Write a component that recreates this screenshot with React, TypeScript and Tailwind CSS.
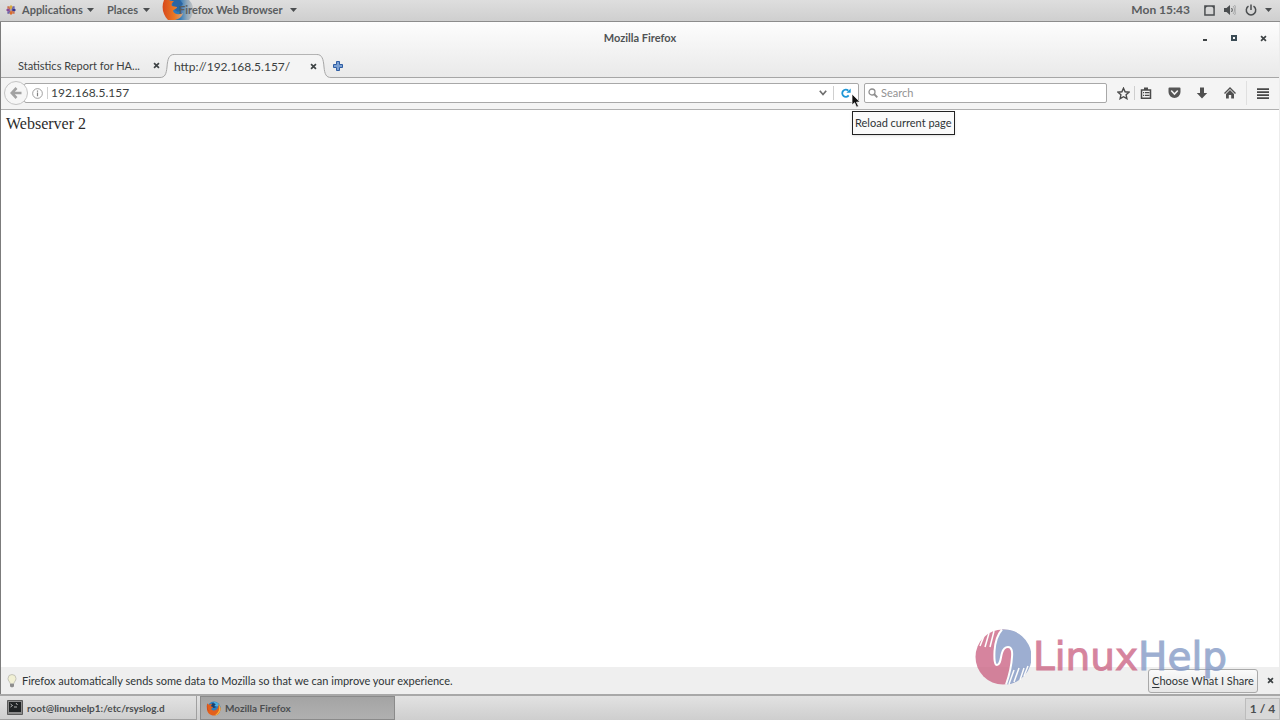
import type { ReactNode } from "react";

function FirefoxLogo({ className }: { className: string }) {
  return (
    <svg viewBox="0 0 32 32" className={className} aria-hidden="true">
      <circle cx="17" cy="15" r="14" fill="#2f7fc0" />
      <path d="M17 2c6 0 11 4 13 9-4-1-6 1-9 0-3-1-5-5-4-9z" fill="#4fb0e0" />
      <path d="M12 6c3-2 7-1 9 2-2 0-3 1-3 3l4 2-5 2-6-2z" fill="#17406f" />
      <path d="M3 5c1 2 2 3 4 3 2-2 4-2 6-1-2 1-3 3-3 4l5 2c0 2-3 2-4 4 2 4 8 4 12 1 3-3 4-6 3-11 3 2 5 6 5 10 0 8-6 14-14 14S2 25 2 17c0-4-1-8 1-12z" fill="#e2601c" />
      <path d="M27 8c3 3 4 6 4 10-1 7-6 12-13 13 6-4 10-9 10-15 0-3 0-5-1-8z" fill="#f5b43c" />
      <path d="M3 6c-1 6 0 12 4 17-3-2-5-6-5-10 0-3 0-5 1-7z" fill="#c5381d" />
    </svg>
  );
}

/* The panel version fades out to the right, under the app name. */
function PanelFirefoxLogo() {
  return (
    <svg viewBox="0 0 32 21" className="absolute top-0 left-0 h-[21px] w-8" aria-hidden="true">
      <defs>
        <linearGradient id="panel-globe" x1="0" x2="1">
          <stop offset=".45" stopColor="#2f79b8" />
          <stop offset=".75" stopColor="#93a9ba" />
          <stop offset="1" stopColor="#c2c3c4" />
        </linearGradient>
        <linearGradient id="panel-fox" x1="0" x2="1">
          <stop offset="0" stopColor="#d8481c" />
          <stop offset=".6" stopColor="#ea7a24" />
          <stop offset="1" stopColor="#c9a68a" />
        </linearGradient>
      </defs>
      <path d="M7 0h20q5 5 4 12-1 5-4 8H9z" fill="url(#panel-globe)" />
      <path d="M10 0h8l3 4-3 3 2 2-4 3-5-3z" fill="#2a65a3" />
      <path d="M2 0h5c1 1 3 1 5 1-2 2-3 3-2 5l5 1c0 2-3 2-4 4 2 4 6 4 10 2-1 4-4 6-8 7H6C1 15-1 7 2 0z" fill="url(#panel-fox)" />
    </svg>
  );
}

function Caret() {
  return (
    <svg viewBox="0 0 7 4" className="h-1 w-[7px] shrink-0" aria-hidden="true">
      <path d="M0 0h7L3.5 4z" fill="#4b4e50" />
    </svg>
  );
}

function CloseIcon({ color = "#3e4345" }: { color?: string }) {
  return (
    <svg viewBox="0 0 8 8" className="size-[7px]" aria-hidden="true">
      <path d="M1.2 1.2l5.6 5.6M6.8 1.2L1.2 6.8" stroke={color} strokeWidth="1.9" />
    </svg>
  );
}

function ToolButton({ label, children }: { label: string; children: ReactNode }) {
  return (
    <button type="button" aria-label={label} className="flex h-6 w-7 items-center justify-center">
      {children}
    </button>
  );
}

function TopPanel() {
  return (
    <header className="flex h-[22px] shrink-0 items-center border-b border-[#8c8c8c] bg-linear-to-b from-[#dedede] to-[#cfcfcf] pb-px text-[11px] leading-4 font-bold text-[#5a5d5f]">
      <button type="button" className="flex items-center gap-[3px] pl-[6px]">
        <svg viewBox="0 0 11 11" className="mr-[3px] size-[10px]" aria-hidden="true">
          <path d="M5.500 0l2 2-2 3.500L3.500 2z" fill="#d9a93f" />
          <path d="M11 5.500l-2 2-3.500-2 3.500-2z" fill="#33348e" />
          <path d="M5.500 11l-2-2 2-3.500L7.500 9z" fill="#d96b2b" />
          <path d="M0 5.500l2-2 3.500 2-3.500 2z" fill="#8b4a94" />
          <path d="M7.500 1.500h2v2L6 5zM1.500 7.500v2h2L5 6z" fill="#6b62a8" />
          <path d="M1.500 3.500v-2h2L5 5zM9.500 7.500v2h-2L6 6z" fill="#c9704e" />
        </svg>
        <span className="w-[62px] text-left">Applications</span>
        <Caret />
      </button>
      <button type="button" className="flex items-center gap-1 pl-[13px]">
        <span className="w-8 text-left whitespace-nowrap">Places</span>
        <Caret />
      </button>
      <button type="button" className="relative ml-3 flex h-[21px] items-center gap-[3px] overflow-hidden pl-[17px]">
        <PanelFirefoxLogo />
        <span className="relative w-[108px] text-left whitespace-nowrap">Firefox Web Browser</span>
        <Caret />
      </button>
      <div className="ml-auto flex items-center pr-2">
        <time className="pr-[14px] text-[12px]">Mon 15:43</time>
        <svg viewBox="0 0 12 12" className="mr-[9px] size-[11px]" aria-hidden="true">
          <path d="M1 1h10v10H1z" fill="none" stroke="#4b4e50" strokeWidth="1.6" />
          <path d="M1 1h3L1 4zM11 1H8l3 3z" fill="#4b4e50" />
        </svg>
        <svg viewBox="0 0 12 12" className="mr-[9px] size-3" aria-hidden="true">
          <path d="M0 4h2.500L6 1v10L2.500 8H0z" fill="#4b4e50" />
          <path d="M7.500 4c1 1.200 1 2.800 0 4" fill="none" stroke="#4b4e50" />
          <path d="M9 2c2 2.200 2 5.800 0 8M10.500 1c2 3 2 7 0 10" fill="none" stroke="#a4a5a6" />
        </svg>
        <svg viewBox="0 0 12 12" className="mr-2 size-3" aria-hidden="true">
          <path d="M3.500 2.200a4.700 4.700 0 1 0 5 0M6 .5V6" fill="none" stroke="#4b4e50" strokeWidth="1.500" />
        </svg>
        <Caret />
      </div>
    </header>
  );
}

function TitleBar() {
  return (
    <div className="grid h-8 shrink-0 grid-cols-[1fr_auto_1fr] items-center text-[11px] leading-4 font-bold text-[#505355]">
      <span />
      <h1>Mozilla Firefox</h1>
      <div className="flex items-center justify-end gap-[23px] pr-3">
        <button type="button" aria-label="Minimize" className="flex size-[6px] items-end justify-center">
          <span className="h-[2px] w-1 bg-[#3e4345]" />
        </button>
        <button type="button" aria-label="Maximize" className="size-[6px] border-2 border-[#3b4b55]" />
        <button type="button" aria-label="Close window">
          <CloseIcon />
        </button>
      </div>
    </div>
  );
}

function TabStrip() {
  return (
    <div className="flex h-6 shrink-0 text-[12px] leading-4 text-[#3c3f41]">
      <div className="flex w-[159px] items-center border-b border-[#a6a6a6] pl-[17px]">
        <span className="flex-1 text-[11px] whitespace-nowrap">Statistics Report for HA...</span>
        <button type="button" aria-label="Close Statistics Report tab">
          <CloseIcon />
        </button>
      </div>
      <div className="flex w-[171px]">
        <svg viewBox="0 0 14 24" className="h-6 w-[14px] shrink-0" aria-hidden="true">
          <path d="M0 23.500C5 23.500 6.300 20 7 13 7.600 5 9 .5 14 .5V24H0z" fill="#f4f4f4" />
          <path d="M0 23.500C5 23.500 6.300 20 7 13 7.600 5 9 .5 14 .5" fill="none" stroke="#a6a6a6" />
        </svg>
        <div className="flex flex-1 items-center border-t border-[#b4b4b4] bg-[#f4f4f4]">
          <span className="flex-1">http://192.168.5.157/</span>
          <button type="button" aria-label="Close current tab">
            <CloseIcon />
          </button>
        </div>
        <svg viewBox="0 0 14 24" className="h-6 w-[14px] shrink-0" aria-hidden="true">
          <path d="M14 23.500C9 23.500 7.700 20 7 13 6.400 5 5 .5 0 .5V24h14z" fill="#f4f4f4" />
          <path d="M14 23.500C9 23.500 7.700 20 7 13 6.400 5 5 .5 0 .5" fill="none" stroke="#a6a6a6" />
        </svg>
      </div>
      <div className="flex flex-1 items-center border-b border-[#a6a6a6] pl-[2px]">
        <button type="button" aria-label="Open a new tab">
          <svg viewBox="0 0 10 10" className="size-[10px]" aria-hidden="true">
            <path d="M3.500.5h3v3h3v3h-3v3h-3v-3h-3v-3h3z" fill="#7ba0d2" stroke="#2f5da3" />
          </svg>
        </button>
      </div>
    </div>
  );
}

function NavBar() {
  return (
    <nav className="flex h-8 shrink-0 items-center border-b border-[#b0b0b0] bg-[#f4f4f4] pr-[2px] pb-px pl-[3px]">
      <button type="button" aria-label="Back" className="z-10 flex size-6 shrink-0 items-center justify-center rounded-full border border-[#c4c4c4] bg-[#f6f6f6]">
        <svg viewBox="0 0 12 12" className="size-3" aria-hidden="true">
          <path d="M6.500 1L1.800 6l4.700 5M2 6h9.500" fill="none" stroke="#a2a2a2" strokeWidth="2.600" />
        </svg>
      </button>
      <div className="relative -ml-1 flex h-5 flex-1 items-center rounded-[2px] border border-[#a8a8a8] bg-white pl-[7px]">
        <svg viewBox="0 0 12 12" className="size-[11px] shrink-0" aria-hidden="true">
          <circle cx="6" cy="6" r="5.300" fill="none" stroke="#8c8c8c" strokeWidth=".9" />
          <path d="M6 5v4M6 2.700v1.400" stroke="#808080" strokeWidth="1.300" />
        </svg>
        <span className="ml-1 h-3 w-px bg-[#cfcfcf]" />
        <input
          aria-label="Address"
          defaultValue="192.168.5.157"
          className="ml-[3px] min-w-0 flex-1 text-[12px] leading-4 text-[#3c3f41] outline-none"
        />
        <button type="button" aria-label="Show history" className="mr-[6px]">
          <svg viewBox="0 0 8 6" className="h-[6px] w-2" aria-hidden="true">
            <path d="M.8.8L4 4.500 7.200.8" fill="none" stroke="#6e6e6e" strokeWidth="1.700" />
          </svg>
        </button>
        <span className="h-[14px] w-px bg-[#cfcfcf]" />
        <button type="button" aria-label="Reload" aria-describedby="reload-tip" className="flex w-6 justify-center">
          <svg viewBox="0 0 10 10" className="size-[10px]" aria-hidden="true">
            <path d="M7.300 2.600a3.600 3.600 0 1 0 .4 4.800" fill="none" stroke="#1e96d6" strokeWidth="1.800" />
            <path d="M9.700.5v4.300H5.400z" fill="#1e96d6" />
          </svg>
        </button>
        <svg viewBox="0 0 10 16" className="absolute top-[9px] -right-[3px] z-20 h-4 w-[10px]" aria-hidden="true">
          <path d="M1 1v11l2.600-2.300 2 4.500 1.900-.9-2-4.200H9z" fill="#111" stroke="#fff" strokeWidth=".7" />
        </svg>
        <div
          id="reload-tip"
          role="tooltip"
          className="absolute top-[27px] left-full z-10 -ml-[6px] border border-[#222] bg-[#fafafa] px-[2px] py-[3px] text-[11px] leading-4 whitespace-nowrap text-[#2e3436] shadow-sm"
        >
          Reload current page
        </div>
      </div>
      <label className="ml-[5px] flex h-5 w-[243px] items-center rounded-[2px] border border-[#a8a8a8] bg-white pl-[3px]">
        <svg viewBox="0 0 10 10" className="size-[10px] shrink-0" aria-hidden="true">
          <circle cx="4" cy="4" r="3" fill="none" stroke="#8e8e8e" strokeWidth="1.300" />
          <path d="M6 6l3.300 3.300" stroke="#8e8e8e" strokeWidth="1.900" />
        </svg>
        <input
          aria-label="Search"
          placeholder="Search"
          className="ml-[3px] min-w-0 flex-1 text-[11px] leading-4 outline-none placeholder:text-[#929292]"
        />
      </label>
      <div className="ml-[2px] flex items-center">
        <ToolButton label="Bookmark this page">
          <svg viewBox="0 0 13 13" className="size-[13px]" aria-hidden="true">
            <path d="M6.500 1.200l1.600 3.600 3.900.4-2.900 2.600.8 3.900-3.400-2-3.400 2 .8-3.900L1 5.200l3.900-.4z" fill="none" stroke="#4a4a4a" strokeWidth="1.400" />
          </svg>
        </ToolButton>
        <span className="-mr-[3px] -ml-[3px] h-[14px] w-px bg-[#cfcfcf]" />
        <ToolButton label="Bookmarks list">
          <svg viewBox="0 0 12 12" className="size-3" aria-hidden="true">
            <path d="M1.500 3h9v8.200h-9z" fill="none" stroke="#4a4a4a" strokeWidth="1.500" />
            <path d="M4 .5h4V3H4zM3 5h1.200v1.200H3zM5 5h4.500v1.200H5zM3 7.800h1.200V9H3zM5 7.800h4.500V9H5z" fill="#4a4a4a" />
          </svg>
        </ToolButton>
        <ToolButton label="Save to Pocket">
          <svg viewBox="0 0 13 12" className="h-3 w-[13px]" aria-hidden="true">
            <path d="M1.500.5h10q1 0 1 1V5a6 6 0 0 1-12 0V1.500q0-1 1-1z" fill="#565656" />
            <path d="M3.600 4l2.900 3 2.900-3" fill="none" stroke="#f4f4f4" strokeWidth="1.600" strokeLinecap="round" />
          </svg>
        </ToolButton>
        <ToolButton label="Downloads">
          <svg viewBox="0 0 12 12" className="size-3" aria-hidden="true">
            <path d="M4 .5h4V6h3.200L6 11.600.8 6H4z" fill="#505050" />
          </svg>
        </ToolButton>
        <ToolButton label="Home">
          <svg viewBox="0 0 12 12" className="size-3" aria-hidden="true">
            <path d="M.5 6.400L6 1l5.500 5.400" fill="none" stroke="#505050" strokeWidth="1.400" />
            <path d="M2 6.900l4-4 4 4v4.600H7.200V8H4.800v3.500H2z" fill="#505050" />
          </svg>
        </ToolButton>
        <span className="mx-[2px] h-6 w-px bg-[#e0e0e0]" />
        <ToolButton label="Open menu">
          <svg viewBox="0 0 12 11" className="h-[11px] w-3" aria-hidden="true">
            <path d="M0 1.200h12M0 4.200h12M0 7.200h12M0 10.200h12" stroke="#484848" strokeWidth="1.700" />
          </svg>
        </ToolButton>
      </div>
    </nav>
  );
}

function Watermark() {
  return (
    <div className="pointer-events-none absolute right-[52px] bottom-[9px] z-20 flex items-center gap-[2px] opacity-80">
      <svg viewBox="0 0 56 56" className="size-14" aria-hidden="true">
        <circle cx="28" cy="28" r="27.500" fill="#cc6686" />
        <path d="M27 .5C22 6 20 14 19.500 22c-.3 7-.2 14 2.500 14 3.500 0 3.500-7 5-12s3.500-6 6-6c4 0 4.500 5 4 10-.5 9-3 19-6 27.500A27.500 27.500 0 0 0 27 .5z" fill="#859bc6" />
        <path d="M27 .5C22 6 20 14 19.500 22c-.3 7-.2 14 2.500 14 3.500 0 3.500-7 5-12s3.500-6 6-6c4 0 4.500 5 4 10-.5 9-3 19-6 27.500" fill="none" stroke="#fff" strokeWidth="2" />
        <path d="M9 7L5 17M14 4l-4 14M19 2l-4 16M49 39l-4 12M44 39l-5 14M39 41l-5 14M53 37l-4 10" fill="none" stroke="#fff" strokeWidth="1.500" />
      </svg>
      <span className="font-['DejaVu_Sans',sans-serif] text-[39px] leading-[48px] text-[#859bc6] [-webkit-text-stroke:1px_currentColor]">
        <span className="text-[#cc6686]">Linux</span>Help
      </span>
    </div>
  );
}

function NotificationBar() {
  return (
    <aside className="relative flex h-[27px] shrink-0 items-center bg-[#efefef] pr-[5px] pl-[6px] text-[11px] leading-4 text-[#2e3436]">
      <svg viewBox="0 0 10 14" className="mr-[5px] h-[14px] w-[10px]" aria-hidden="true">
        <path d="M5 .5a4 4 0 0 0-4 4C1 7 3 7.500 3 9.500h4c0-2 2-2.500 2-5a4 4 0 0 0-4-4z" fill="#f1f0d4" stroke="#b8b8ae" strokeWidth=".8" />
        <path d="M3 10h4v2.500L5 13.500 3 12.500z" fill="#8e8e8e" />
      </svg>
      <p className="flex-1">Firefox automatically sends some data to Mozilla so that we can improve your experience.</p>
      <button
        type="button"
        className="h-6 w-[110px] rounded-[3px] border border-[#a9a9a9] bg-linear-to-b from-[#fafafa] to-[#e6e6e6] whitespace-nowrap"
      >
        <span className="underline underline-offset-2">C</span>hoose What I Share
      </button>
      <button type="button" aria-label="Dismiss notification" className="ml-[9px]">
        <CloseIcon />
      </button>
      <Watermark />
    </aside>
  );
}

function TaskBar() {
  return (
    <footer className="flex h-[26px] shrink-0 items-stretch border-t-2 border-[#a8a8a8] bg-linear-to-b from-[#e2e2e2] to-[#cecece] text-[10px] leading-4 font-bold text-[#4b4e50]">
      <button type="button" className="flex w-[197px] items-center gap-1 border-r border-b border-[#a0a0a0] pl-[7px]">
        <svg viewBox="0 0 16 15" className="h-[15px] w-4" aria-hidden="true">
          <path d="M.5.5h15v14H.5z" fill="#8b8b8b" stroke="#5a5a5a" />
          <path d="M2 2h12v10H2z" fill="#202324" />
          <path d="M3.500 4l2 1.500-2 1.500M7 7h3M9 3l1.500 2" fill="none" stroke="#d8d8d8" strokeWidth=".8" />
        </svg>
        root@linuxhelp1:/etc/rsyslog.d
      </button>
      <button type="button" className="ml-[3px] flex w-[195px] items-center gap-1 border border-[#8a8a8a] bg-linear-to-b from-[#a4a4a4] to-[#b0b0b0] pl-[5px]">
        <FirefoxLogo className="size-[15px]" />
        Mozilla Firefox
      </button>
      <div className="mt-[2px] ml-auto flex w-[35px] items-center justify-center border border-[#bcbcbc] bg-[#d8d8d8] text-[12px] whitespace-nowrap">
        1 / 4
      </div>
    </footer>
  );
}

export default function App() {
  return (
    <div className="flex h-screen flex-col overflow-hidden bg-white font-[Lato,'Open_Sans',sans-serif]">
      <TopPanel />
      <div className="flex min-h-0 flex-1 flex-col border-r border-l border-r-[#ececec] border-l-[#7c7c7c]">
        <div className="flex shrink-0 flex-col bg-linear-to-b from-[#fdfdfd] to-[#e9e9e9]">
          <TitleBar />
          <TabStrip />
        </div>
        <NavBar />
        <main className="min-h-0 flex-1 bg-white px-[5px] py-1 font-['Liberation_Serif',serif] text-[16px] leading-5 text-[#2c2c2c]">
          Webserver 2
        </main>
        <NotificationBar />
      </div>
      <TaskBar />
    </div>
  );
}
